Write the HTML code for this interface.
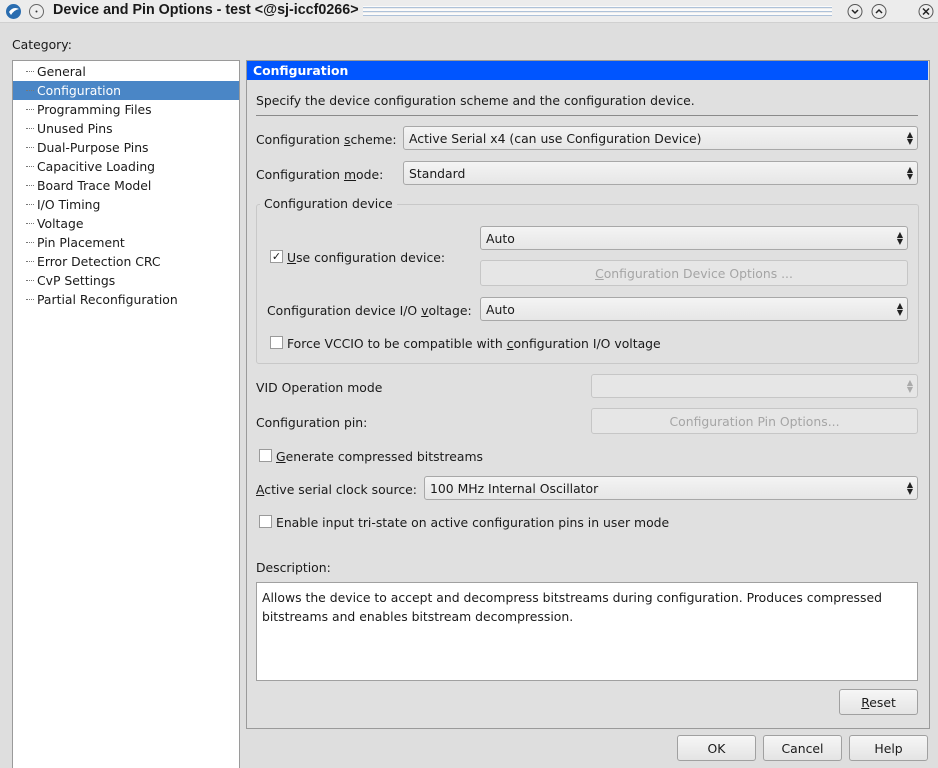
<!DOCTYPE html>
<html><head><style>
body{margin:0;width:938px;height:766px;background:#dedede;font-family:"DejaVu Sans","Liberation Sans",sans-serif;font-size:12.4px;color:#1a1a1a;position:relative;overflow:hidden}
.a{position:absolute;white-space:nowrap}
.t{margin-top:1px}
.combo{position:absolute;height:24px;border:1px solid #a8a8a8;border-radius:3px;background:linear-gradient(#f4f4f4,#e6e6e6);box-sizing:border-box;padding:0 0 0 5px;line-height:23px}
.arr{position:absolute;right:4px;top:4px;font-size:8px;line-height:7px;color:#222}
.btn{position:absolute;height:26px;border:1px solid #a0a0a0;border-radius:3px;background:linear-gradient(#f6f6f6,#e4e4e4);box-sizing:border-box;text-align:center;line-height:25px}
.dis{color:#a5a5a5;background:#e6e6e6;border-color:#c6c6c6}
.cb{position:absolute;width:11px;height:11px;border:1px solid #9a9a9a;background:#fff}
.tree div{height:19px;line-height:20px;padding-left:24px;position:relative}
.tree div:before{content:"";position:absolute;left:13px;top:9px;width:8px;border-top:1px dotted #777}
u{text-decoration:underline}
</style></head><body>
<div class="a" style="left:0;top:0;width:938px;height:22px;background:#ececec;border-bottom:1px solid #d0d0d0"></div>
<svg class="a" style="left:5px;top:3px" width="17" height="17"><circle cx="8.5" cy="8.5" r="7.5" fill="#2a6db0"/><path d="M4 9 Q8 3 14 6 Q9 7 6 12Z" fill="#fff"/></svg>
<svg class="a" style="left:28px;top:3px" width="17" height="17"><circle cx="8.5" cy="8.5" r="7" fill="#eee" stroke="#666"/><circle cx="8.5" cy="8.5" r="1" fill="#333"/></svg>
<div class="a" style="left:362px;top:6px;width:470px;height:10px;background:repeating-linear-gradient(#fff 0 1px,#9fb7d4 1px 2px,#ececec 2px 3px,#fff 3px 4px);opacity:.8"></div>
<div class="a" style="left:53px;top:2px;font-weight:bold;font-size:14.3px;font-family:'Liberation Sans',sans-serif;background:#ececec;padding-right:4px">Device and Pin Options - test &lt;@sj-iccf0266&gt;</div>
<svg class="a" style="left:846px;top:3px" width="90" height="17"><g fill="#eee" stroke="#555"><circle cx="9" cy="8.5" r="7"/><circle cx="33" cy="8.5" r="7"/><circle cx="80" cy="8.5" r="7"/></g><g fill="none" stroke="#222" stroke-width="1.5"><path d="M6 7l3 3 3-3M30 10l3-3 3 3M77 5.5l6 6M83 5.5l-6 6"/></g></svg>
<div class="a t" style="left:12px;top:36px">Category:</div>
<div class="a tree" style="left:12px;top:60px;width:226px;height:706px;background:#fff;border:1px solid #9a9a9a;border-bottom:none;padding-top:1px">
<div>General</div><div style="background:#4a86c6;color:#fff">Configuration</div><div>Programming Files</div><div>Unused Pins</div><div>Dual-Purpose Pins</div><div>Capacitive Loading</div><div>Board Trace Model</div><div>I/O Timing</div><div>Voltage</div><div>Pin Placement</div><div>Error Detection CRC</div><div>CvP Settings</div><div>Partial Reconfiguration</div>
</div>
<div class="a" style="left:246px;top:60px;width:682px;height:667px;border:1px solid #9a9a9a;background:#e0e0e0"></div>
<div class="a" style="left:247px;top:61px;width:681px;height:19px;background:#0055ff;color:#fff;font-weight:bold;line-height:19px;padding-left:6px;box-sizing:border-box">Configuration</div>
<div class="a t" style="left:256px;top:92px">Specify the device configuration scheme and the configuration device.</div>
<div class="a" style="left:256px;top:115px;width:662px;border-top:1px solid #8a8a8a"></div>
<div class="a t" style="left:256px;top:131px">Configuration <u>s</u>cheme:</div>
<div class="combo" style="left:403px;top:126px;width:515px">Active Serial x4 (can use Configuration Device)<span class="arr">▲<br>▼</span></div>
<div class="a t" style="left:256px;top:166px">Configuration <u>m</u>ode:</div>
<div class="combo" style="left:403px;top:161px;width:515px">Standard<span class="arr">▲<br>▼</span></div>
<div class="a" style="left:256px;top:204px;width:661px;height:158px;border:1px solid #c8c8c8;border-radius:3px"></div>
<div class="a t" style="left:260px;top:195px;background:#e0e0e0;padding:0 4px">Configuration device</div>
<div class="cb" style="left:270px;top:250px;font-size:11px;line-height:11px;text-align:center">✓</div>
<div class="a t" style="left:287px;top:249px"><u>U</u>se configuration device:</div>
<div class="combo" style="left:480px;top:226px;width:428px">Auto<span class="arr">▲<br>▼</span></div>
<div class="btn dis" style="left:480px;top:260px;width:428px"><u>C</u>onfiguration Device Options ...</div>
<div class="a t" style="left:267px;top:302px">Configuration device I/O <u>v</u>oltage:</div>
<div class="combo" style="left:480px;top:297px;width:428px">Auto<span class="arr">▲<br>▼</span></div>
<div class="cb" style="left:270px;top:336px"></div>
<div class="a t" style="left:287px;top:335px">Force VCCIO to be compatible with <u>c</u>onfiguration I/O voltage</div>
<div class="a t" style="left:256px;top:379px">VID Operation mode</div>
<div class="combo dis" style="left:591px;top:374px;width:327px;background:#e6e6e6;border-color:#c6c6c6"><span class="arr" style="color:#aaa">▲<br>▼</span></div>
<div class="a t" style="left:256px;top:414px">Configuration pin:</div>
<div class="btn dis" style="left:591px;top:408px;width:327px">Configuration Pin Options...</div>
<div class="cb" style="left:259px;top:449px"></div>
<div class="a t" style="left:276px;top:448px"><u>G</u>enerate compressed bitstreams</div>
<div class="a t" style="left:256px;top:481px"><u>A</u>ctive serial clock source:</div>
<div class="combo" style="left:424px;top:476px;width:494px">100 MHz Internal Oscillator<span class="arr">▲<br>▼</span></div>
<div class="cb" style="left:259px;top:515px"></div>
<div class="a t" style="left:276px;top:514px">Enable input tri-state on active configuration pins in user mode</div>
<div class="a t" style="left:256px;top:559px">Description:</div>
<div class="a" style="left:256px;top:582px;width:662px;height:99px;background:#fff;border:1px solid #a0a0a0;box-sizing:border-box;padding:5px 5px;white-space:normal;line-height:19px">Allows the device to accept and decompress bitstreams during configuration. Produces compressed bitstreams and enables bitstream decompression.</div>
<div class="btn" style="left:839px;top:689px;width:79px"><u>R</u>eset</div>
<div class="btn" style="left:677px;top:735px;width:79px">OK</div>
<div class="btn" style="left:763px;top:735px;width:79px">Cancel</div>
<div class="btn" style="left:849px;top:735px;width:79px">Help</div>
</body></html>
